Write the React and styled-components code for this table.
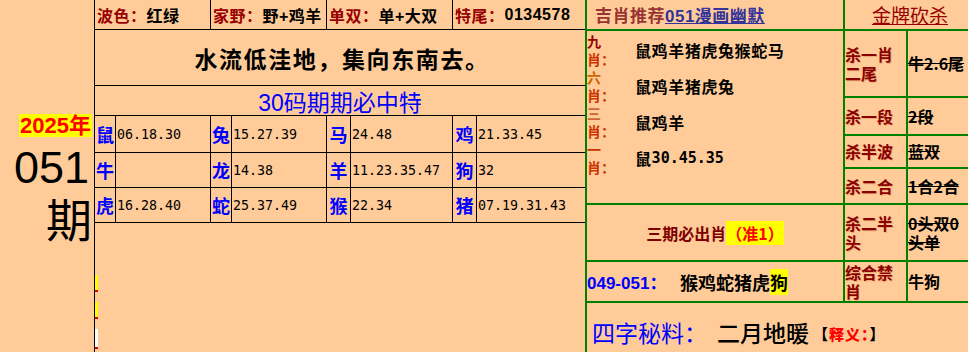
import React from "react";
import styled, { createGlobalStyle } from "styled-components";

const GlobalStyle = createGlobalStyle`
  html, body {
    margin: 0;
    padding: 0;
    background: #ffcc99;
    overflow: hidden;
  }
  body {
    font-family: "Noto Sans CJK SC", sans-serif;
  }
`;

const Page = styled.div`
  display: flex;
  width: 968px;
  height: 352px;
  overflow: hidden;
  background: #ffcc99;
`;

/* ---------- left: issue number ---------- */
const IssueCol = styled.div`
  width: 94px;
  flex-shrink: 0;
  display: flex;
  flex-direction: column;
  align-items: flex-end;
  padding: 114px 2px 0 0;
  box-sizing: border-box;
`;
const YearTag = styled.div`
  background: #ffff00;
  color: #ff0000;
  font-family: "Liberation Sans", "Noto Sans CJK SC", sans-serif;
  font-weight: bold;
  font-size: 22px;
  line-height: 23px;
  padding: 0 1px;
`;
const IssueNum = styled.div`
  font-family: "Liberation Sans", sans-serif;
  font-size: 45px;
  line-height: 46px;
  margin-top: 8px;
  margin-right: 3px;
  color: #000;
`;
const IssueWord = styled.div`
  font-size: 46px;
  line-height: 52px;
  color: #000;
`;

/* ---------- middle: black table ---------- */
const MidCol = styled.div`
  width: 491px;
  flex-shrink: 0;
  border-left: 1px solid #000;
  box-sizing: border-box;
  display: flex;
  flex-direction: column;
`;
const MidGrid = styled.div`
  display: grid;
  grid-template-columns: 20px 94px 20px 94px 23px 101px 23px 108px;
  grid-template-rows: 29px 55px 29px 36px 34px 34px;
  gap: 1px;
  background: #000;
  border-bottom: 1px solid #000;
  & > * {
    background: #ffcc99;
  }
`;
const InfoCell = styled.div`
  grid-column: span 2;
  display: flex;
  align-items: center;
  padding-left: 2px;
  font-family: "Liberation Sans", "Noto Sans CJK SC", sans-serif;
  font-size: 16px;
  font-weight: bold;
  letter-spacing: 0.5px;
  white-space: nowrap;
  color: #000;
`;
const InfoLabel = styled.span`
  color: #990000;
`;
const Headline = styled.div`
  grid-column: 1 / -1;
  display: flex;
  align-items: center;
  justify-content: center;
  font-size: 23px;
  font-weight: bold;
  letter-spacing: 1.6px;
  padding-left: 4px;
  color: #000;
`;
const Subhead = styled.div`
  grid-column: 1 / -1;
  display: flex;
  align-items: center;
  justify-content: center;
  font-family: "Liberation Sans", "Noto Sans CJK SC", sans-serif;
  font-size: 23px;
  color: #0000ff;
`;
const ZodiacCell = styled.div`
  display: flex;
  align-items: center;
  justify-content: center;
  color: #0000ff;
  font-weight: bold;
  font-size: 18px;
`;
const NumCell = styled.div`
  display: flex;
  align-items: center;
  padding-left: 1px;
  font-family: "DejaVu Sans Mono", monospace;
  font-size: 13.3px;
  color: #000;
`;
const Marks = styled.div`
  display: flex;
  flex-direction: column;
  gap: 10px;
  margin-top: 52px;
  width: 3px;
`;
const Mark = styled.div`
  height: ${(p) => p.h}px;
  background: ${(p) => p.bg};
  border-bottom: 2px solid #dd0000;
`;

/* ---------- right: green table ---------- */
const RightGrid = styled.div`
  width: 383px;
  height: 352px;
  flex-shrink: 0;
  box-sizing: border-box;
  padding-left: 2px;
  display: grid;
  grid-template-columns: 256px 61px 60px;
  grid-template-rows: 29px 65px 36px 31px 34px 55px 39px 1fr;
  gap: 2px;
  background: #008000;
  & > * {
    background: #ffcc99;
  }
`;
const TitleCell = styled.div`
  grid-column: 1;
  grid-row: 1;
  display: flex;
  align-items: center;
  padding-left: 8px;
  font-size: 17px;
  font-weight: bold;
  letter-spacing: 0.5px;
  color: #993333;
  white-space: nowrap;
`;
const TitleLink = styled.span`
  color: #333399;
  text-decoration: underline;
  font-family: "Liberation Sans", "Noto Sans CJK SC", sans-serif;
`;
const GoldCell = styled.div`
  grid-column: 2 / span 2;
  grid-row: 1;
  display: block;
  box-sizing: border-box;
  padding: 3px 0 0 27px;
  white-space: nowrap;
`;
const GoldTitle = styled.span`
  font-size: 19px;
  line-height: 24px;
  color: #990000;
  text-decoration: underline;
`;
const PicksCell = styled.div`
  grid-column: 1;
  grid-row: 2 / 6;
  display: flex;
  padding-top: 1px;
`;
const PickLabels = styled.div`
  width: 26px;
  display: flex;
  flex-direction: column;
`;
const PickLabel = styled.div`
  height: 36px;
  display: flex;
  flex-direction: column;
  justify-content: center;
  font-size: 14px;
  font-weight: bold;
  line-height: 18px;
  color: #cc3300;
  white-space: nowrap;
  span {
    color: ${(p) => p.tone};
  }
`;
const PickValues = styled.div`
  display: flex;
  flex-direction: column;
  padding-left: 22px;
`;
const PickValue = styled.div`
  height: 36px;
  display: flex;
  align-items: center;
  font-size: 16px;
  font-weight: bold;
  letter-spacing: 0.6px;
  color: #000;
`;
const Digits = styled.span`
  font-family: "DejaVu Sans Mono", monospace;
  font-size: 15px;
  letter-spacing: 0;
`;
const KillLabel = styled.div`
  grid-column: 2;
  display: flex;
  align-items: center;
  font-size: 16px;
  font-weight: bold;
  line-height: 19px;
  color: #8b0000;
  text-shadow: 1px 1px 0 rgba(204, 102, 51, 0.35);
`;
const KillValue = styled.div`
  grid-column: 3;
  display: flex;
  align-items: center;
  font-size: 16px;
  font-weight: bold;
  line-height: 19px;
  color: #000;
  white-space: ${(p) => (p.nowrap ? "nowrap" : "normal")};
  word-break: break-all;
  text-decoration: ${(p) => (p.struck ? "line-through" : "none")};
`;
const MustCell = styled.div`
  grid-column: 1;
  display: flex;
  align-items: center;
  justify-content: center;
  font-size: 16px;
  font-weight: bold;
  color: #800000;
`;
const Highlight = styled.span`
  background: #ffff00;
  color: ${(p) => p.color || "#000"};
`;
const HistoryCell = styled.div`
  grid-column: 1;
  display: flex;
  align-items: center;
  white-space: nowrap;
`;
const HistoryRange = styled.span`
  font-family: "Liberation Sans", "Noto Sans CJK SC", sans-serif;
  font-size: 17px;
  font-weight: bold;
  color: #0000ff;
  width: 93px;
`;
const HistoryPicks = styled.span`
  font-size: 18px;
  font-weight: bold;
  color: #000;
`;
const SecretCell = styled.div`
  grid-column: 1 / -1;
  display: flex;
  align-items: center;
  padding: 8px 0 0 5px;
  white-space: nowrap;
`;
const SecretLabel = styled.span`
  font-size: 23px;
  color: #0000ff;
  margin-right: 10px;
`;
const SecretText = styled.span`
  font-size: 23px;
  font-weight: 500;
  color: #000;
`;
const Note = styled.span`
  font-size: 15px;
  font-weight: bold;
  color: #000;
  margin-left: 4px;
  padding-top: 4px;
  letter-spacing: 1px;
  b {
    color: #ff0000;
  }
`;

const info = [
  ["波色：", "红绿"],
  ["家野：", "野+鸡羊"],
  ["单双：", "单+大双"],
  ["特尾：", "0134578"],
];

const rows = [
  [["鼠", "06.18.30"], ["兔", "15.27.39"], ["马", "24.48"], ["鸡", "21.33.45"]],
  [["牛", ""], ["龙", "14.38"], ["羊", "11.23.35.47"], ["狗", "32"]],
  [["虎", "16.28.40"], ["蛇", "25.37.49"], ["猴", "22.34"], ["猪", "07.19.31.43"]],
];

const picks = [
  { n: "九", tone: "#990000", v: "鼠鸡羊猪虎兔猴蛇马" },
  { n: "六", tone: "#cc6600", v: "鼠鸡羊猪虎兔" },
  { n: "三", tone: "#cc6633", v: "鼠鸡羊" },
  { n: "一", tone: "#cc3300", v: null },
];

const kills = [
  ["杀一肖二尾", "牛2.6尾", true, true],
  ["杀一段", "2段", true],
  ["杀半波", "蓝双", true],
  ["杀二合", "1合2合", true],
  ["杀二半头", "0头双0头单", true],
  ["综合禁肖", "牛狗", false],
];

export default function App() {
  return (
    <>
      <GlobalStyle />
      <Page>
        <IssueCol>
          <YearTag>2025年</YearTag>
          <IssueNum>051</IssueNum>
          <IssueWord>期</IssueWord>
        </IssueCol>

        <MidCol>
          <MidGrid>
            {info.map(([l, v]) => (
              <InfoCell key={l}>
                <InfoLabel>{l}</InfoLabel>
                {v}
              </InfoCell>
            ))}
            <Headline>水流低洼地，集向东南去。</Headline>
            <Subhead>30码期期必中特</Subhead>
            {rows.map((row) =>
              row.map(([z, n]) => (
                <React.Fragment key={z}>
                  <ZodiacCell>{z}</ZodiacCell>
                  <NumCell>{n}</NumCell>
                </React.Fragment>
              ))
            )}
          </MidGrid>
          <Marks>
            <Mark h={15} bg="#ffff00" />
            <Mark h={15} bg="#ffff00" />
            <Mark h={18} bg="#ffffff" />
          </Marks>
        </MidCol>

        <RightGrid>
          <TitleCell>
            吉肖推荐<TitleLink>051漫画幽默</TitleLink>
          </TitleCell>
          <GoldCell>
            <GoldTitle>金牌砍杀</GoldTitle>
          </GoldCell>

          <PicksCell>
            <PickLabels>
              {picks.map((p) => (
                <PickLabel key={p.n} tone={p.tone}>
                  <span>{p.n}</span>
                  <div>肖：</div>
                </PickLabel>
              ))}
            </PickLabels>
            <PickValues>
              {picks.map((p) => (
                <PickValue key={p.n}>
                  {p.v || (
                    <>
                      鼠<Digits>30.45.35</Digits>
                    </>
                  )}
                </PickValue>
              ))}
            </PickValues>
          </PicksCell>

          {kills.slice(0, 4).map(([l, v, s, nw]) => (
            <React.Fragment key={l}>
              <KillLabel>{l}</KillLabel>
              <KillValue struck={s} nowrap={nw}>
                {v}
              </KillValue>
            </React.Fragment>
          ))}

          <MustCell>
            三期必出肖<Highlight color="#ff0000">（准1）</Highlight>
          </MustCell>
          <KillLabel>{kills[4][0]}</KillLabel>
          <KillValue struck>{kills[4][1]}</KillValue>

          <HistoryCell>
            <HistoryRange>049-051：</HistoryRange>
            <HistoryPicks>
              猴鸡蛇猪虎<Highlight>狗</Highlight>
            </HistoryPicks>
          </HistoryCell>
          <KillLabel>{kills[5][0]}</KillLabel>
          <KillValue>{kills[5][1]}</KillValue>

          <SecretCell>
            <SecretLabel>四字秘料：</SecretLabel>
            <SecretText>二月地暖</SecretText>
            <Note>
              【<b>释义：</b>】
            </Note>
          </SecretCell>
        </RightGrid>
      </Page>
    </>
  );
}
